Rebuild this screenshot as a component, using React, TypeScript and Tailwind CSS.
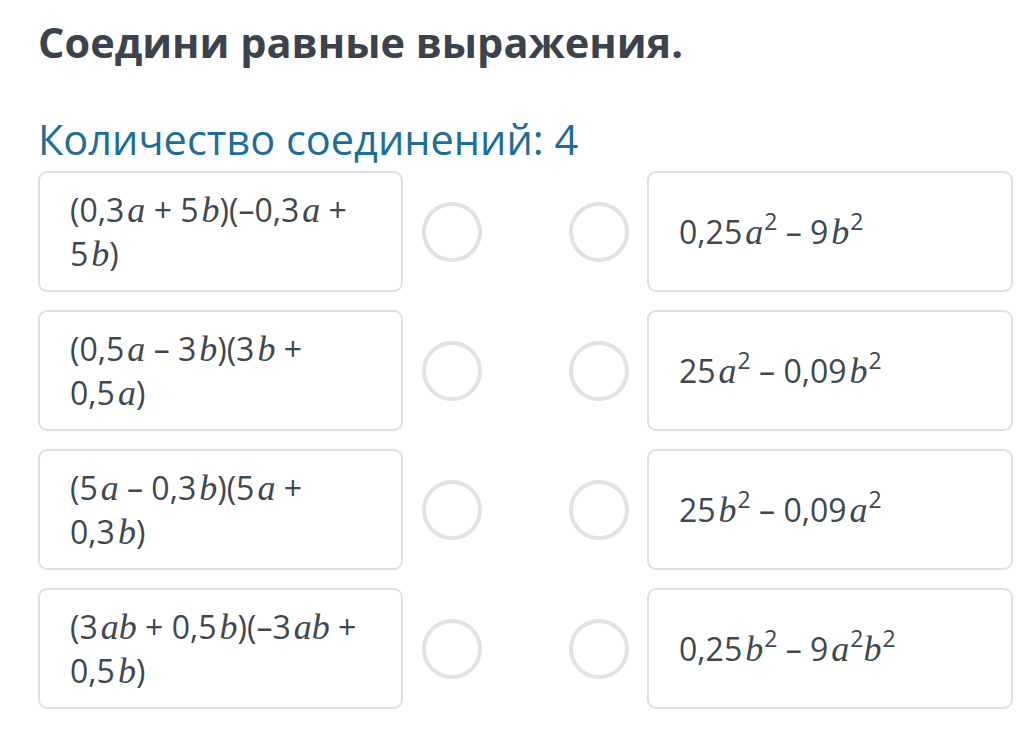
import React from "react";

const V: React.FC<{ children: React.ReactNode; tight?: boolean }> = ({ children, tight }) => (
  <span className={`font-['Liberation_Serif',serif] italic text-[36px] ${tight ? "" : "ml-[3px]"}`}>
    {children}
  </span>
);

const Sup: React.FC<{ children: React.ReactNode }> = ({ children }) => (
  <sup className="text-[23px] -top-[14px] ml-[1px]">{children}</sup>
);

type Row = { left: React.ReactNode; right: React.ReactNode };

const rows: Row[] = [
  {
    left: (
      <>
        (0,3<V>a</V> + 5<V>b</V>)(–0,3<V>a</V> +
        <br />5<V>b</V>)
      </>
    ),
    right: (
      <>
        0,25<V>a</V>
        <Sup>2</Sup> – 9<V>b</V>
        <Sup>2</Sup>
      </>
    ),
  },
  {
    left: (
      <>
        (0,5<V>a</V> – 3<V>b</V>)(3<V>b</V> +
        <br />
        0,5<V>a</V>)
      </>
    ),
    right: (
      <>
        25<V>a</V>
        <Sup>2</Sup> – 0,09<V>b</V>
        <Sup>2</Sup>
      </>
    ),
  },
  {
    left: (
      <>
        (5<V>a</V> – 0,3<V>b</V>)(5<V>a</V> +
        <br />
        0,3<V>b</V>)
      </>
    ),
    right: (
      <>
        25<V>b</V>
        <Sup>2</Sup> – 0,09<V>a</V>
        <Sup>2</Sup>
      </>
    ),
  },
  {
    left: (
      <>
        (3<V>ab</V> + 0,5<V>b</V>)(–3<V>ab</V> +
        <br />
        0,5<V>b</V>)
      </>
    ),
    right: (
      <>
        0,25<V>b</V>
        <Sup>2</Sup> – 9<V>a</V>
        <Sup>2</Sup>
        <V tight>b</V>
        <Sup>2</Sup>
      </>
    ),
  },
];

const Circle = () => (
  <div className="w-[60px] h-[60px] shrink-0 rounded-full border-[4px] border-[#dfe3e7]" />
);

const card =
  "shrink-0 h-full rounded-[9px] border-2 border-[#dde0e4] flex items-center pl-[30px] text-[32px] leading-[43px] text-[#41474f]";

export default function App() {
  return (
    <div className="min-h-[753px] bg-white pl-[38px] pr-[21px] font-['Open_Sans',sans-serif]">
      <h1 className="pt-[14px] text-[41.5px] leading-[56px] font-bold text-[#3c434c]">
        Соедини равные выражения.
      </h1>
      <div className="mt-[42px] text-[41.5px] leading-[54px] text-[#1e6e98]">
        Количество соединений: 4
      </div>
      <div className="mt-[5px] flex flex-col gap-[18px]">
        {rows.map((r, i) => (
          <div key={i} className="flex items-center justify-between h-[121px]">
            <div className="flex items-center gap-[19px] h-full">
              <div className={`w-[365px] ${card}`}>
                <div>{r.left}</div>
              </div>
              <Circle />
            </div>
            <div className="flex items-center gap-[18px] h-full">
              <Circle />
              <div className={`w-[366px] ${card}`}>
                <div>{r.right}</div>
              </div>
            </div>
          </div>
        ))}
      </div>
    </div>
  );
}
